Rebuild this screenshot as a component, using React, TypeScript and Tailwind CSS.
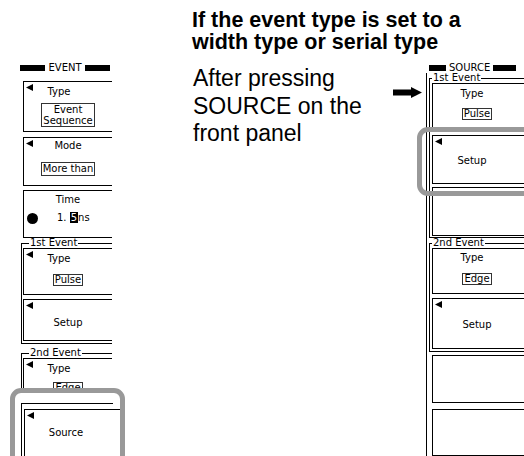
import React from "react";

const panel = "font-['DejaVu_Sans',sans-serif] text-[10px] text-black";

function Tri({ top = "top-[2px]" }: { top?: string }) {
  return (
    <svg width="7" height="7" viewBox="0 0 7 7" className={`absolute left-[2px] ${top}`}>
      <polygon points="0,3.5 7,0 7,7" fill="black" />
    </svg>
  );
}

function Box({
  h,
  tri,
  className = "",
  children,
}: {
  h: string;
  tri?: boolean;
  className?: string;
  children?: React.ReactNode;
}) {
  return (
    <div className={`relative w-[100px] shrink-0 border-t border-l border-b border-black ${h} ${className}`}>
      {tri && <Tri />}
      {children}
    </div>
  );
}

function Value({ children, lh = "leading-[10px]" }: { children: React.ReactNode; lh?: string }) {
  return (
    <div className={`mx-auto w-fit border border-[#333] px-[1px] text-center ${lh}`}>{children}</div>
  );
}

function Group({
  label,
  legend,
  className = "",
  children,
}: {
  label: string;
  legend: string;
  className?: string;
  children: React.ReactNode;
}) {
  return (
    <fieldset className={`min-w-0 w-[104px] border-t border-l border-b border-black ${className}`}>
      <legend className={`px-[1px] leading-[10px] ${legend}`}>{label}</legend>
      {children}
    </fieldset>
  );
}

function Header({ text, left, right }: { text: string; left: string; right: string }) {
  return (
    <div className="flex h-[8px] items-center">
      <div className={`h-[6px] bg-black ${left}`} />
      <span className="mx-[3px] leading-[10px]">{text}</span>
      <div className={`h-[6px] bg-black ${right}`} />
    </div>
  );
}

function LeftPanel() {
  return (
    <div className={`ml-[20px] flex w-[92px] shrink-0 flex-col overflow-hidden ${panel}`}>
      <div className="mt-[64px] w-[90px]">
        <Header text="EVENT" left="flex-1" right="flex-1" />
      </div>

      <Box h="h-[51px]" tri className="ml-[3px] mt-[9px]">
        <div className="w-[88px]">
          <div className="pt-[4px] pr-[18px] text-center leading-[12px]">Type</div>
          <div className="mt-[5px]">
            <Value lh="leading-[11px]">
              Event
              <br />
              Sequence
            </Value>
          </div>
        </div>
      </Box>

      <Box h="h-[49px]" tri className="ml-[3px] mt-[5px]">
        <div className="w-[88px]">
          <div className="pt-[2px] text-center leading-[12px]">Mode</div>
          <div className="mt-[10px]">
            <Value lh="leading-[12px]">More than</Value>
          </div>
        </div>
      </Box>

      <Box h="h-[48px]" className="ml-[3px] mt-[4px]">
        <div className="w-[88px]">
          <div className="pt-[3px] text-center leading-[12px]">Time</div>
          <div className="mt-[6px] flex h-[12px] items-center">
            <div className="ml-[3px] h-[11px] w-[11px] rounded-full bg-black" />
            <span className="ml-[19px] leading-[12px]">
              1.&nbsp;<span className="bg-black px-[1px] text-white">5</span>ns
            </span>
          </div>
        </div>
      </Box>

      <Group label="1st Event" legend="ml-[7px]" className="ml-[1px] pb-[2px]">
        <div className="pl-[1px]">
          <Box h="h-[47px]" tri>
            <div className="w-[88px]">
              <div className="pt-[4px] pr-[18px] text-center leading-[12px]">Type</div>
              <div className="mt-[9px]">
                <Value>Pulse</Value>
              </div>
            </div>
          </Box>
          <Box h="h-[42px]" tri className="mt-[4px]">
            <div className="w-[88px] pt-[17px] text-center leading-[12px]">Setup</div>
          </Box>
        </div>
      </Group>

      <Group label="2nd Event" legend="ml-[7px]" className="ml-[1px] mt-[4px] pb-[2px]">
        <div className="pl-[1px]">
          <Box h="h-[46px]" tri>
            <div className="w-[88px]">
              <div className="pt-[4px] pr-[18px] text-center leading-[12px]">Type</div>
              <div className="mt-[7px]">
                <Value>Edge</Value>
              </div>
            </div>
          </Box>
          <Box h="h-[50px]" tri className="mt-[5px]">
            <div className="w-[88px] pt-[17px] pr-[6px] text-center leading-[12px]">Source</div>
          </Box>
        </div>
      </Group>
    </div>
  );
}

function RightPanel() {
  return (
    <div className={`ml-[4px] mt-[8px] flex h-[400px] w-[98px] shrink-0 flex-col overflow-hidden pt-[3px] ${panel}`}>
      <div className="ml-[3px]">
        <Header text="SOURCE" left="w-[17px]" right="w-[23px]" />
      </div>
      <div className="mt-[1px] flex flex-1 flex-col border-l border-black">
        <Group label="1st Event" legend="ml-[2px]" className="ml-[2px] pb-[1px]">
          <div className="pl-[2px]">
            <Box h="h-[47px]">
              <div className="w-[88px]">
                <div className="pt-[4px] pr-[10px] text-center leading-[12px]">Type</div>
                <div className="mt-[8px]">
                  <Value>Pulse</Value>
                </div>
              </div>
            </Box>
            <Box h="h-[49px]" tri className="mt-[5px]">
              <div className="w-[88px] pt-[19px] pr-[10px] text-center leading-[12px]">Setup</div>
            </Box>
            <Box h="h-[49px]" className="mt-[3px]" />
          </div>
        </Group>

        <Group label="2nd Event" legend="ml-[2px]" className="ml-[2px] pb-[2px]">
          <div className="pl-[2px]">
            <Box h="h-[46px]">
              <div className="w-[88px]">
                <div className="pt-[3px] pr-[10px] text-center leading-[12px]">Type</div>
                <div className="mt-[9px]">
                  <Value>Edge</Value>
                </div>
              </div>
            </Box>
            <Box h="h-[51px]" tri className="mt-[4px]">
              <div className="w-[88px] pt-[20px] text-center leading-[12px]">Setup</div>
            </Box>
          </div>
        </Group>

        <Box h="h-[48px]" className="ml-[5px] mt-[3px]" />
        <Box h="h-[47px]" className="ml-[5px] mt-[6px]" />
      </div>
    </div>
  );
}

export default function App() {
  return (
    <div className="relative flex h-[456px] w-[524px] overflow-hidden bg-white text-black">
      <LeftPanel />

      <div className="ml-[80px] flex w-[332px] shrink-0 flex-col font-['Liberation_Sans',Arial,sans-serif]">
        <h1 className="whitespace-nowrap pt-[9px] text-[21.5px] font-bold leading-[22px]">
          If the event type is set to a
          <br />
          width type or serial type
        </h1>
        <div className="flex">
          <p className="ml-[1px] mt-[12px] w-[189px] shrink-0 whitespace-nowrap text-[23px] leading-[27.5px]">
            After pressing
            <br />
            SOURCE on the
            <br />
            front panel
          </p>
          <svg width="29" height="11" viewBox="0 0 29 11" className="ml-[11px] mt-[34px] shrink-0">
            <polygon points="0,2.5 18,2.5 18,0 29,5.5 18,11 18,8.5 0,8.5" fill="black" />
          </svg>
          <RightPanel />
        </div>
      </div>

      {/* callout on the left menu */}
      <div
        className={`absolute left-[10px] top-[388px] h-[80px] w-[115px] overflow-hidden rounded-[11px] border-[5px] border-[#999] bg-white ${panel}`}
      >
        <div className="ml-[6px] mt-[10px] h-[70px] w-[92px] border-t border-l border-black pl-[2px] pt-[5px]">
          <div className="relative h-[60px] w-[100px] border-t border-l border-black">
            <Tri />
            <div className="w-[88px] pt-[17px] pr-[6px] text-center leading-[12px]">Source</div>
          </div>
        </div>
      </div>

      {/* callout on the right menu */}
      <div className="absolute left-[417px] top-[127px] h-[69px] w-[120px] rounded-[11px] border-[5px] border-[#999]" />
    </div>
  );
}
